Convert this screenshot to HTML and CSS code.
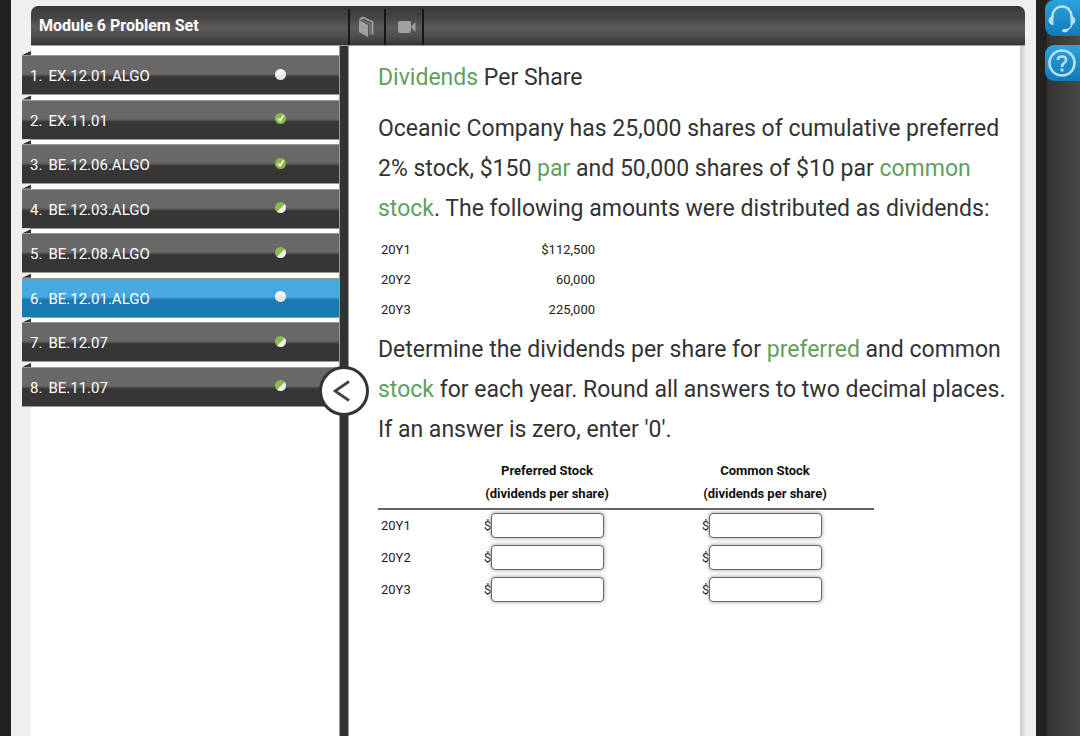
FILE: index.html
```html
<!DOCTYPE html>
<html lang="en">
<head>
<meta charset="utf-8">
<title>Module 6 Problem Set</title>
<link rel="stylesheet" href="styles.css">
</head>
<body>
<div class="page">
  <div class="app">
    <header class="topbar">
      <h1 class="title">Module 6 Problem Set</h1>
      <button class="tool book" aria-label="eBook">
        <svg width="16" height="22" viewBox="0 0 16 22"><path d="M1 4 10 9V21L1 16Z" fill="#a0a0a0"/><path d="M1.500 3.500 5 1.500 14.500 6V18.500" fill="none" stroke="#a0a0a0" stroke-width="1.800"/><path d="M3 3.500 12 8V19" fill="none" stroke="#888" stroke-width="1"/></svg>
      </button>
      <button class="tool video" aria-label="Video">
        <svg width="20" height="14" viewBox="0 0 20 14"><rect x="1" y="1" width="13" height="12" rx="2" fill="#a0a0a0"/><path d="M14 7 18.500 2V12Z" fill="#a0a0a0"/></svg>
      </button>
    </header>
    <div class="body">
      <nav class="sidebar">
        <ol class="problems">
          <li><a class="item" href="#p1"><span>1.</span><span class="name">EX.12.01.ALGO</span><i class="dot"></i></a></li>
          <li><a class="item" href="#p2"><span>2.</span><span class="name">EX.11.01</span><i class="dot done"><svg width="11" height="11" viewBox="0 0 11 11"><path d="M3 5.500 5 7.800 8.500 2.500" fill="none" stroke="#fff" stroke-width="1.600"/></svg></i></a></li>
          <li><a class="item" href="#p3"><span>3.</span><span class="name">BE.12.06.ALGO</span><i class="dot done"><svg width="11" height="11" viewBox="0 0 11 11"><path d="M3 5.500 5 7.800 8.500 2.500" fill="none" stroke="#fff" stroke-width="1.600"/></svg></i></a></li>
          <li><a class="item" href="#p4"><span>4.</span><span class="name">BE.12.03.ALGO</span><i class="dot half"></i></a></li>
          <li><a class="item" href="#p5"><span>5.</span><span class="name">BE.12.08.ALGO</span><i class="dot half"></i></a></li>
          <li><a class="item current" href="#p6" aria-current="page"><span>6.</span><span class="name">BE.12.01.ALGO</span><i class="dot"></i></a></li>
          <li><a class="item" href="#p7"><span>7.</span><span class="name">BE.12.07</span><i class="dot half"></i></a></li>
          <li><a class="item" href="#p8"><span>8.</span><span class="name">BE.11.07</span><i class="dot half"></i></a></li>
        </ol>
      </nav>
      <div class="divider">
        <button class="collapse" aria-label="Collapse problem list">
          <svg width="18" height="22" viewBox="0 0 18 22"><path d="M16 1.500 2 11 16 20.500" fill="none" stroke="#444" stroke-width="2.800"/></svg>
        </button>
      </div>
      <main class="content">
        <h2 class="heading"><a href="#dividends">Dividends</a> Per Share</h2>
        <p class="text">Oceanic Company has 25,000 shares of cumulative preferred<br>2% stock, $150 <a href="#par">par</a> and 50,000 shares of $10 par <a href="#common">common<br>stock</a>. The following amounts were distributed as dividends:</p>
        <table class="amounts">
          <tr><th scope="row">20Y1</th><td>$112,500</td></tr>
          <tr><th scope="row">20Y2</th><td>60,000</td></tr>
          <tr><th scope="row">20Y3</th><td>225,000</td></tr>
        </table>
        <p class="text">Determine the dividends per share for <a href="#preferred">preferred</a> and common<br><a href="#stock">stock</a> for each year. Round all answers to two decimal places.<br>If an answer is zero, enter '0'.</p>
        <table class="answers">
          <thead>
            <tr><td></td><th scope="col">Preferred Stock<br>(dividends per share)</th><td></td><th scope="col">Common Stock<br>(dividends per share)</th><td></td></tr>
          </thead>
          <tbody>
            <tr><th scope="row">20Y1</th><td><label class="field">$<input type="text" aria-label="20Y1 preferred"></label></td><td></td><td><label class="field">$<input type="text" aria-label="20Y1 common"></label></td><td></td></tr>
            <tr><th scope="row">20Y2</th><td><label class="field">$<input type="text" aria-label="20Y2 preferred"></label></td><td></td><td><label class="field">$<input type="text" aria-label="20Y2 common"></label></td><td></td></tr>
            <tr><th scope="row">20Y3</th><td><label class="field">$<input type="text" aria-label="20Y3 preferred"></label></td><td></td><td><label class="field">$<input type="text" aria-label="20Y3 common"></label></td><td></td></tr>
          </tbody>
        </table>
      </main>
      <div class="edge"></div>
    </div>
  </div>
</div>
<aside class="rail">
  <button class="help" aria-label="Support">
    <svg width="28" height="30" viewBox="0 0 28 30"><path d="M4.500 15V13A9.500 9.500 0 0 1 23.500 13V15" fill="none" stroke="#b9dff2" stroke-width="2.400"/><path d="M5 13V22Q1 21 1 17.500T5 13ZM23 13V22Q27 21 27 17.500T23 13Z" fill="#b9dff2" stroke="#b9dff2"/><path d="M24 21Q23 26 18 27" fill="none" stroke="#b9dff2" stroke-width="1.400"/><ellipse cx="17" cy="27.500" rx="3" ry="1.800" fill="#b9dff2"/></svg>
  </button>
  <button class="help" aria-label="Help">
    <svg width="28" height="28" viewBox="0 0 28 28"><circle cx="14" cy="14" r="12.500" fill="none" stroke="#b9dff2" stroke-width="2.600"/><path d="M9.800 11Q9.800 7.500 14 7.500T18 11Q18 13 16 14.200T14 17.500V18" fill="none" stroke="#b9dff2" stroke-width="2.600"/><circle cx="14" cy="21" r="1.700" fill="#b9dff2"/></svg>
  </button>
</aside>
</body>
</html>
```
FILE: styles.css
```css
* { box-sizing: border-box; }
body {
  margin: 0;
  min-height: 100vh;
  display: flex;
  padding-left: 11px;
  background: #222;
  font-family: Roboto, "Liberation Sans", sans-serif;
  color: #333;
}
button { padding: 0; border: 0; cursor: pointer; }
svg { display: block; }
a { color: #5f9f60; text-decoration: none; }

.page {
  flex: 1;
  display: flex;
  padding: 6px 11px 0 20px;
  background: #efefef;
}
.app { flex: 1; display: flex; flex-direction: column; }

.topbar {
  display: flex;
  height: 40px;
  border-bottom: 1px solid #999;
  border-radius: 7px 7px 0 0;
  background: linear-gradient(#383838, #454545 30%, #5b5b5b 55%, #505050 75%, #363636);
}
.title {
  width: 317px;
  margin: 0;
  padding-left: 8px;
  font-size: 16px;
  font-weight: 700;
  line-height: 39px;
  color: #fff;
}
.tool {
  display: flex;
  align-items: center;
  justify-content: center;
  margin-top: 3px;
  border-left: 2px solid #161616;
  background: none;
}
.book { width: 36px; padding-right: 3px; }
.video { width: 40px; border-right: 2px solid #161616; padding-left: 5px; }

.body { flex: 1; display: flex; background: #fff; }
.sidebar { width: 308px; padding-top: 9px; }
.problems {
  display: flex;
  flex-direction: column;
  justify-content: space-between;
  min-height: 352px;
  margin: 0 0 0 -9px;
  padding: 0;
  list-style: none;
}
.item {
  position: relative;
  display: flex;
  align-items: center;
  gap: 6px;
  height: 40px;
  padding: 2px 53px 0 8px;
  border: solid #999;
  border-width: 1px 0;
  background: linear-gradient(#686868 47%, #505050 51%, #363636 55%);
  font-size: 15px;
  color: #fff;
}
.item::before {
  content: "";
  position: absolute;
  left: 0;
  top: -5px;
  width: 9px;
  height: 4px;
  background: #333;
  clip-path: polygon(0 100%, 100% 0, 100% 100%);
}
.item::after {
  content: "";
  position: absolute;
  left: 0;
  top: -6px;
  width: 9px;
  height: 5px;
  background: #efefef;
  clip-path: polygon(0 0, 100% 0, 0 100%);
}
.current { background: linear-gradient(#48a8e0 47%, #2f90c8 51%, #1a79b0 55%); }
.name { flex: 1; }
.dot {
  width: 11px;
  height: 11px;
  margin-bottom: 4px;
  border-radius: 50%;
  background: linear-gradient(#fff, #ddd);
}
.done { background: #8db84a; }
.half { background: linear-gradient(135deg, #8db84a 52%, #f2f5ec 56%); }

.divider {
  position: relative;
  width: 10px;
  border: solid #999;
  border-width: 0 1px;
  background: #333;
}
.collapse {
  position: absolute;
  top: 320px;
  left: -21px;
  width: 50px;
  height: 50px;
  display: flex;
  align-items: center;
  justify-content: center;
  padding-right: 5px;
  border: 3px solid #333;
  border-radius: 50%;
  background: #fff;
}

.content { flex: 1; padding: 12px 8px 20px 29px; }
.heading { margin: 0 0 11px; font-size: 23px; font-weight: 400; line-height: 40px; }
.text { margin: 0; font-size: 23px; line-height: 40px; }
.amounts, .answers { border-collapse: collapse; font-size: 13px; color: #222; }
.amounts { margin: 5px 0 6px; }
.amounts th, .amounts td { height: 30px; padding: 0 3px; }
th[scope="row"] { padding: 0 3px; font-weight: 400; text-align: left; }
.amounts th { width: 120px; }
.amounts td { width: 100px; text-align: right; }

.answers { width: 496px; margin-top: 9px; table-layout: fixed; }
.answers td { padding: 0; }
.answers thead td, .answers thead th { border-bottom: 2px solid #666; }
.answers th[scope="col"] {
  padding: 0 0 3px;
  line-height: 23px;
  white-space: nowrap;
  color: #111;
}
.answers thead td:first-child { width: 106px; }
.answers thead td:nth-child(3) { width: 92px; }
.answers thead td:last-child { width: 46px; }
.answers tbody tr { height: 32px; }
.field { display: flex; align-items: center; }
.field input {
  width: 113px;
  height: 25px;
  padding: 0 4px;
  border: 1px solid #666;
  border-radius: 4px;
  background: #fff;
  box-shadow: 0 0 4px #999;
  font: inherit;
}
.edge { width: 5px; background: linear-gradient(90deg, #ccc, #e2e2e2); }

.rail {
  width: 44px;
  display: flex;
  flex-direction: column;
  align-items: flex-end;
  gap: 9px;
  background: linear-gradient(90deg, #222 11px, #333 11px, #484848);
}
.help {
  width: 35px;
  height: 36px;
  padding-left: 3px;
  border-radius: 9px 0 0 9px;
  background: linear-gradient(#2aa3dc, #1279b8);
}
```
